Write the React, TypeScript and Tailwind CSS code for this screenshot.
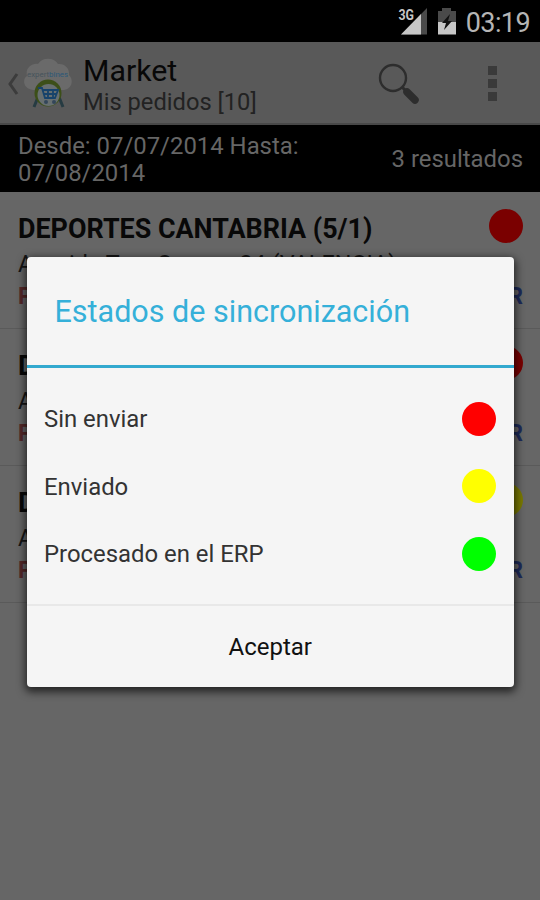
type SyncState = 'unsent' | 'sent' | 'processed';

interface Order {
  id: number;
  customer: string;
  address: string;
  state: SyncState;
}

const ORDERS: Order[] = [
  { id: 1, customer: 'DEPORTES CANTABRIA (5/1)', address: 'Avenida Tres Cruces, 24 (VALENCIA)', state: 'unsent' },
  { id: 2, customer: 'D', address: 'A', state: 'unsent' },
  { id: 3, customer: 'D', address: 'A', state: 'sent' },
];

const LEGEND: { label: string; state: SyncState }[] = [
  { label: 'Sin enviar', state: 'unsent' },
  { label: 'Enviado', state: 'sent' },
  { label: 'Procesado en el ERP', state: 'processed' },
];

const DOT: Record<SyncState, string> = {
  unsent: 'bg-[#ff0000]',
  sent: 'bg-[#ffff00]',
  processed: 'bg-[#00ff00]',
};

const DIM_DOT: Record<SyncState, string> = {
  unsent: 'bg-[#7a0000]',
  sent: 'bg-[#7a7a00]',
  processed: 'bg-[#007a00]',
};

function StatusBar() {
  return (
    <div className="flex h-[42px] shrink-0 items-center justify-end bg-black pr-[10px]">
      <svg width="30" height="32" viewBox="0 0 30 32" className="mr-[9px]">
        <path d="M3 29.5 L29 3 V29.5 Z" fill="#4a4a4a" />
        <path d="M3 29.5 L23 9 V29.5 Z" fill="#c6c6c6" />
        <text x="0.5" y="14.5" fontSize="14" fontWeight="700" fill="#c6c6c6" stroke="#000" strokeWidth="2" paintOrder="stroke" textLength="15.5" lengthAdjust="spacingAndGlyphs">3G</text>
      </svg>
      <svg width="20" height="28" viewBox="0 0 20 28" className="mr-[9px]">
        <path d="M1 4 H5 V1 H14 V4 H19 V15 H1 Z" fill="#4a4a4a" />
        <path d="M1 15 H19 V27.5 H1 Z" fill="#c6c6c6" />
        <path d="M13 7 L5 16 H9 L7 23 L15 14 H11 Z" fill="#111" />
      </svg>
      <span className="pt-[4px] text-[27px] leading-8 tracking-[-0.6px] text-[#b5b5b5]">03:19</span>
    </div>
  );
}

function AppLogo() {
  return (
    <svg width="50" height="54" viewBox="0 0 50 54" className="shrink-0">
      <path d="M10 34 C0 33 -1 23 4 20 C2 12 9 7 15 8 C19 1 31 1 35 8 C42 7 47 13 46 19 C51 24 49 33 41 34 Z" fill="#6a6a6a" />
      <path d="M15 41 L11 51 M36 41 L40 51" stroke="#263b42" strokeWidth="3" />
      <circle cx="25" cy="37" r="13.5" fill="#3c4f18" />
      <circle cx="25.5" cy="39" r="11" fill="#676f70" />
      <path d="M15 32 H19 L22 42 H32 L35 34 H20 M21 38 H33 M25 34 V42 M30 34 V42" fill="none" stroke="#17436b" strokeWidth="1.8" />
      <circle cx="23" cy="46" r="2" fill="#33465a" />
      <circle cx="31" cy="46" r="2" fill="#33465a" />
      <text x="4" y="21" fontSize="7.5" fill="#46545c" textLength="41" lengthAdjust="spacingAndGlyphs">
        expert<tspan fill="#2b5878">bines</tspan>
      </text>
    </svg>
  );
}

function ActionBar() {
  return (
    <div className="flex h-[83px] shrink-0 items-center border-b-2 border-[#484848] bg-[#595959]">
      <svg width="12" height="24" viewBox="0 0 12 24" className="mt-[3px] ml-[7px] shrink-0">
        <path d="M10 2 L3 12 L10 22" fill="none" stroke="#3c3c3c" strokeWidth="3" />
      </svg>
      <div className="ml-[4px]">
        <AppLogo />
      </div>
      <div className="ml-[10px] flex flex-1 flex-col pt-[7px] whitespace-nowrap">
        <span className="text-[30.3px] leading-[33px] text-[#080808]">Market</span>
        <span className="text-[23.7px] leading-[31px] text-[#222]">Mis pedidos [10]</span>
      </div>
      <svg width="42" height="42" viewBox="0 0 42 42" className="mt-[2px] mr-[68px]">
        <circle cx="15" cy="15" r="13" fill="none" stroke="#2d2d2d" strokeWidth="2.4" />
        <path d="M24 24 L29 29" stroke="#2d2d2d" strokeWidth="3" />
        <path d="M29 29 L37 37" stroke="#2d2d2d" strokeWidth="7.5" strokeLinecap="round" />
      </svg>
      <div className="mt-[2px] mr-[43px] flex flex-col gap-[4px]">
        <i className="size-[9px] bg-[#3a3a3a]" />
        <i className="size-[9px] bg-[#3a3a3a]" />
        <i className="size-[9px] bg-[#3a3a3a]" />
      </div>
    </div>
  );
}

function OrderRow({ order }: { order: Order }) {
  return (
    <div className="flex h-[137px] shrink-0 flex-col border-b border-[#5a5a5a] pr-[17px] pl-[18px]">
      <div className="flex h-[55px] items-start justify-between pt-[17px]">
        <span className="pt-[4px] text-[26.9px] leading-8 font-bold text-[#080808]">{order.customer}</span>
        <span className={`size-[34px] rounded-full ${DIM_DOT[order.state]}`} />
      </div>
      <span className="text-[23.3px] leading-[34px] text-[#151515]">{order.address}</span>
      <div className="flex justify-between text-[23px] leading-[32px] font-bold">
        <span className="text-[#552929]">P</span>
        <span className="text-[#1d2a59]">R</span>
      </div>
    </div>
  );
}

function SyncDialog() {
  return (
    <div className="absolute top-[257px] left-[27px] flex h-[430px] w-[486.5px] flex-col rounded-[4px] bg-[#f5f5f5] shadow-[0_3px_9px_2px_rgba(0,0,0,0.65)]">
      <h2 className="flex h-[111px] items-center border-b-[3px] border-[#33a9cf] pt-[2px] pl-[27.5px] text-[30.5px] text-[#35b0d9]">
        Estados de sincronización
      </h2>
      <ul className="flex h-[236px] flex-col pt-[17px] pr-[17.5px] pl-[17px]">
        {LEGEND.map(item => (
          <li key={item.state} className="flex h-[67.5px] items-center justify-between">
            <span className="pt-[3px] text-[23.9px] text-[#333]">{item.label}</span>
            <span className={`size-[34px] rounded-full ${DOT[item.state]}`} />
          </li>
        ))}
      </ul>
      <button className="flex-1 border-t-2 border-[#e8e8e8] text-[24px] text-[#111]">Aceptar</button>
    </div>
  );
}

export default function App() {
  return (
    <div className="relative flex h-[900px] w-[540px] flex-col overflow-hidden bg-[#666] font-[Roboto,sans-serif]">
      <StatusBar />
      <ActionBar />
      <div className="flex h-[67px] shrink-0 items-center justify-between bg-black pt-[2px] pr-[17px] pl-[18px] text-[23.9px] leading-[27px] text-[#666]">
        <span className="w-[300px]">Desde: 07/07/2014 Hasta: 07/08/2014</span>
        <span>3 resultados</span>
      </div>
      {ORDERS.map(order => (
        <OrderRow key={order.id} order={order} />
      ))}
      <SyncDialog />
    </div>
  );
}
